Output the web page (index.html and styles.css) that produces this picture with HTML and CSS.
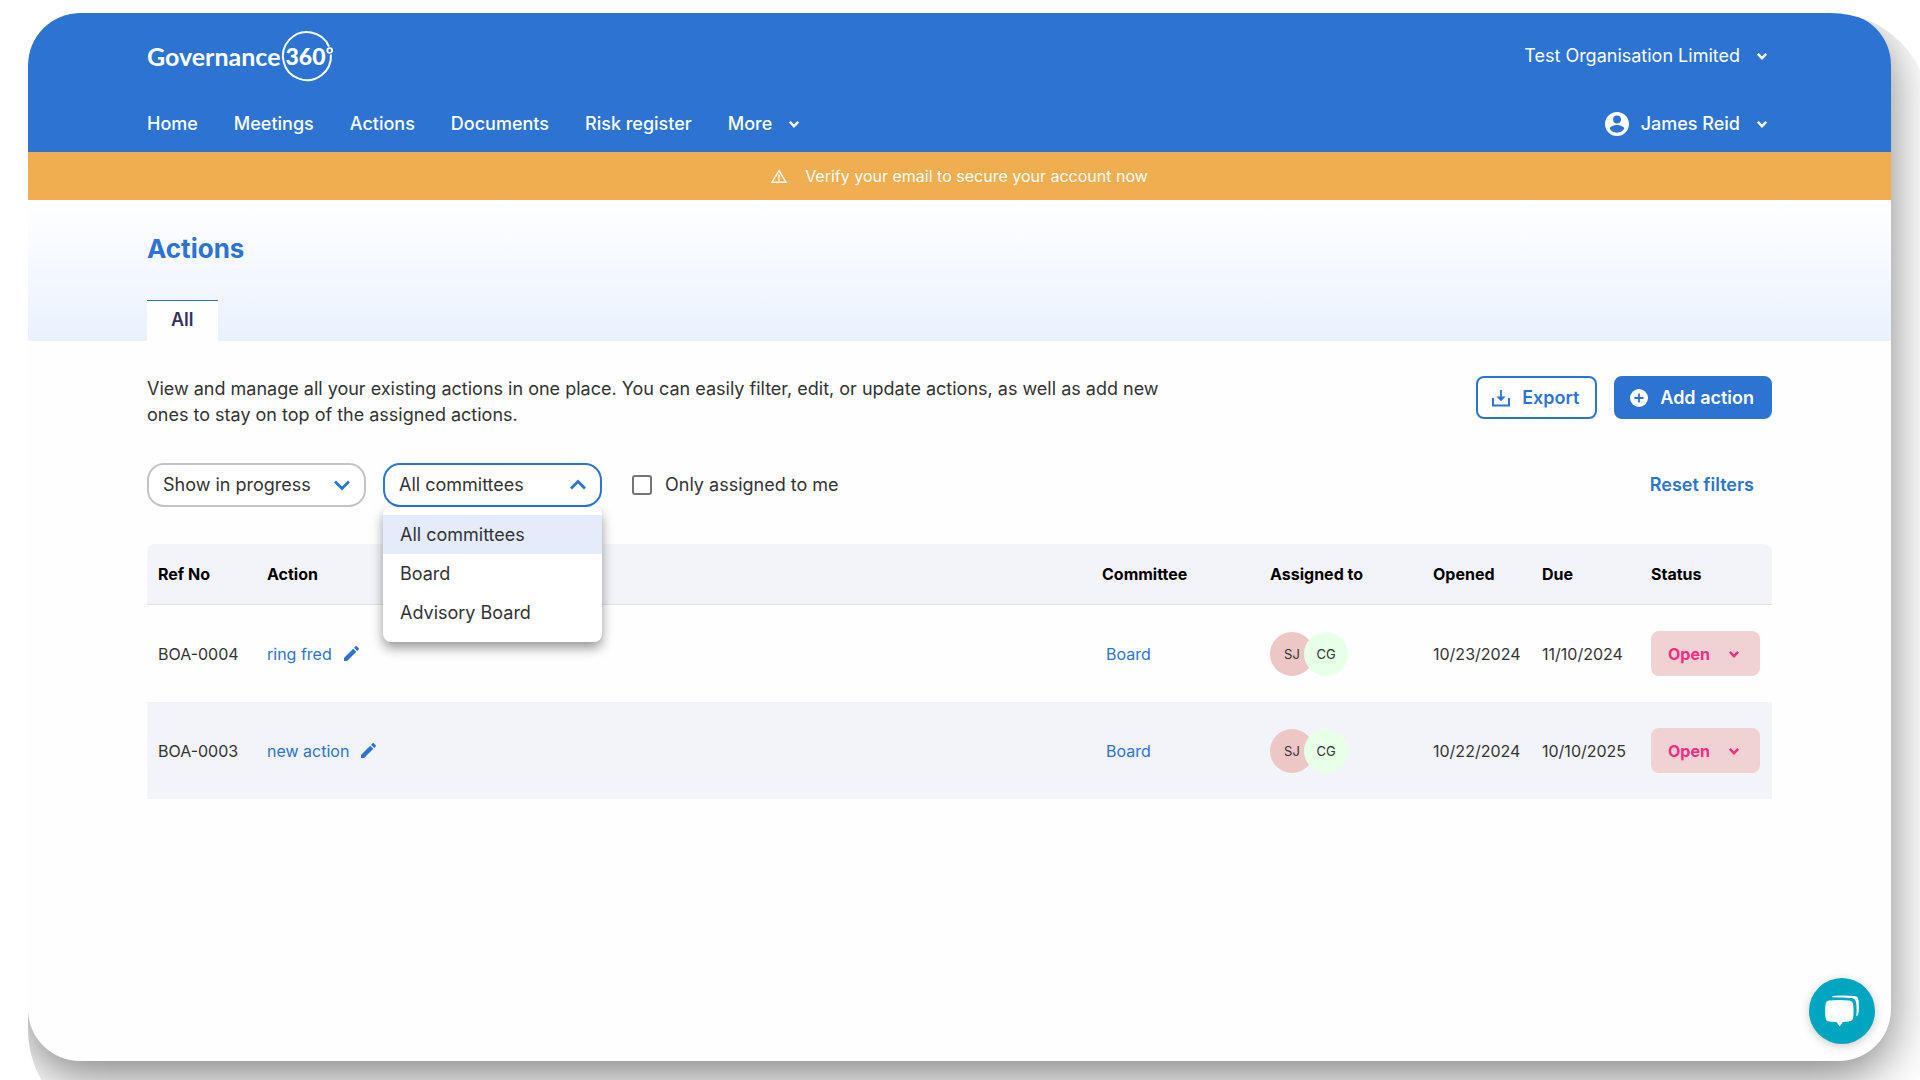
FILE: index.html
```html
<!DOCTYPE html>
<html lang="en">
<head>
<meta charset="utf-8">
<meta name="viewport" content="width=device-width, initial-scale=1">
<title>Actions – Governance 360</title>
<link rel="stylesheet" href="styles.css">
</head>
<body>
<svg class="defs" aria-hidden="true">
  <symbol id="caret" viewBox="0 0 10 10"><path d="M1.5 3.2 5 6.8 8.500 3.200" fill="none" stroke="currentColor" stroke-width="2"/></symbol>
  <symbol id="chevron" viewBox="0 0 18 12"><path d="M2 2.500 9 9.500 16 2.500" fill="none" stroke="currentColor" stroke-width="2.800"/></symbol>
  <symbol id="pencil" viewBox="3 3 18 18"><path d="M3 17.250V21h3.750L17.810 9.940l-3.750-3.750L3 17.250zM20.710 7.040a1 1 0 0 0 0-1.410l-2.340-2.340a1 1 0 0 0-1.410 0l-1.830 1.830 3.750 3.750 1.830-1.830z" fill="currentColor"/></symbol>
</svg>
<div class="stage">
  <div class="shell">
    <div class="card">
      <header class="header">
        <div class="header-row header-top">
          <a class="logo" href="#" aria-label="Governance 360">
            <span class="logo-name">Governance</span>
            <span class="logo-badge">
              <svg class="logo-ring" viewBox="0 0 52 52" aria-hidden="true">
                <path d="M48 16.600A24 24 0 1 0 49.900 24.500" fill="none" stroke="#fff" stroke-width="2"/>
                <circle cx="48.700" cy="20.500" r="2.400" fill="none" stroke="#fff" stroke-width="1.800"/>
              </svg>
              <span class="logo-num">360</span>
            </span>
          </a>
          <button class="menu-button light" type="button">Test Organisation Limited <svg class="caret"><use href="#caret"/></svg></button>
        </div>
        <div class="header-row header-nav">
          <nav class="nav">
            <a href="#">Home</a>
            <a href="#">Meetings</a>
            <a href="#">Actions</a>
            <a href="#">Documents</a>
            <a href="#">Risk register</a>
            <button class="menu-button" type="button">More <svg class="caret"><use href="#caret"/></svg></button>
          </nav>
          <button class="menu-button" type="button">
            <span class="user"><svg class="user-icon" viewBox="2 2 20 20" aria-hidden="true"><path d="M12 2a10 10 0 1 0 0 20 10 10 0 0 0 0-20zm0 3a3.200 3.200 0 1 1 0 6.600A3.200 3.200 0 0 1 12 5zm0 14.200a7.200 7.200 0 0 1-6-3.220c.03-1.990 4-3.080 6-3.080s5.970 1.090 6 3.080a7.200 7.200 0 0 1-6 3.220z" fill="currentColor"/></svg>James Reid</span>
            <svg class="caret"><use href="#caret"/></svg>
          </button>
        </div>
      </header>

      <a class="banner" href="#">
        <svg class="warn" viewBox="0 0 16 14" aria-hidden="true"><path d="M8 1.600 15 13.200H1z" fill="none" stroke="currentColor" stroke-width="1.500"/><path d="M8 5.600v3.800M8 10.300v1.500" stroke="currentColor" stroke-width="1.500"/></svg>
        <span>Verify your email to secure your account now</span>
      </a>

      <section class="hero">
        <h1>Actions</h1>
        <div class="tabs"><a class="tab" href="#">All</a></div>
      </section>

      <main class="content">
        <div class="intro">
          <p>View and manage all your existing actions in one place. You can easily filter, edit, or update actions, as well as add new ones to stay on top of the assigned actions.</p>
          <div class="buttons">
            <button class="btn btn-outline" type="button"><svg class="btn-icon" viewBox="0 0 18 18" aria-hidden="true"><path d="M1 9v7.500h16V9" fill="none" stroke="currentColor" stroke-width="2"/><path d="M9 1v9" stroke="currentColor" stroke-width="1.800"/><path d="M4.300 7.500h9.400L9 12.300z" fill="currentColor"/></svg>Export</button>
            <button class="btn btn-solid" type="button"><svg class="btn-icon" viewBox="0 0 18 18" aria-hidden="true"><circle cx="9" cy="9" r="9" fill="#fff"/><path d="M9 4.500v9M4.500 9h9" stroke="#2d73d2" stroke-width="1.800"/></svg>Add action</button>
          </div>
        </div>

        <form class="filters">
          <div class="field">
            <select class="select" aria-label="Progress"><option>Show in progress</option></select>
            <svg class="select-icon"><use href="#chevron"/></svg>
          </div>
          <div class="field open">
            <select class="select" aria-label="Committee"><option>All committees</option><option>Board</option><option>Advisory Board</option></select>
            <svg class="select-icon"><use href="#chevron"/></svg>
            <ul class="options" role="listbox" aria-label="Committee options">
              <li role="option" aria-selected="true">All committees</li>
              <li role="option" aria-selected="false">Board</li>
              <li role="option" aria-selected="false">Advisory Board</li>
            </ul>
          </div>
          <label class="check"><input type="checkbox"> Only assigned to me</label>
          <button class="reset" type="reset">Reset filters</button>
        </form>

        <table class="table">
          <colgroup><col class="c-ref"><col><col class="c-committee"><col class="c-assigned"><col class="c-date"><col class="c-date"><col class="c-status"></colgroup>
          <thead>
            <tr><th>Ref No</th><th>Action</th><th>Committee</th><th>Assigned to</th><th>Opened</th><th>Due</th><th>Status</th></tr>
          </thead>
          <tbody>
            <tr>
              <td>BOA-0004</td>
              <td><a class="action" href="#">ring fred <svg class="pencil"><use href="#pencil"/></svg></a></td>
              <td><a class="committee" href="#">Board</a></td>
              <td><span class="avatars"><span class="avatar">SJ</span><span class="avatar green">CG</span></span></td>
              <td>10/23/2024</td>
              <td>11/10/2024</td>
              <td><button class="status" type="button">Open <svg class="caret"><use href="#caret"/></svg></button></td>
            </tr>
            <tr>
              <td>BOA-0003</td>
              <td><a class="action" href="#">new action <svg class="pencil"><use href="#pencil"/></svg></a></td>
              <td><a class="committee" href="#">Board</a></td>
              <td><span class="avatars"><span class="avatar">SJ</span><span class="avatar green">CG</span></span></td>
              <td>10/22/2024</td>
              <td>10/10/2025</td>
              <td><button class="status" type="button">Open <svg class="caret"><use href="#caret"/></svg></button></td>
            </tr>
          </tbody>
        </table>
      </main>

      <button class="chat" type="button" aria-label="Open chat">
        <svg viewBox="0 0 34 32" aria-hidden="true">
          <path d="M4 5.500Q14 4.300 24 5.500 27.800 5.900 28.200 9.500 28.900 16 28.200 22.500 27.800 26.100 24 26.500L18 27 14.700 31.600 11.500 27 4 26.500Q.8 26 .5 22.500-.2 16 .5 9.500.9 5.900 4 5.500z" fill="#fff"/>
          <path d="M6.500 2.300Q7 .9 10 .7 20 0 29.500 1 33 1.400 33.500 5 34.300 12 33.500 18 33.200 21 31.300 21.500 32 13 31 7 30.500 3.500 26.500 3 17 2.300 6.500 2.300z" fill="#fff"/>
        </svg>
      </button>
    </div>
  </div>
</div>
</body>
</html>
```
FILE: styles.css
```css
* { box-sizing: border-box; }

body {
  margin: 0;
  background: #fff;
  color: #333;
  font: 400 18px/26px Inter, "Open Sans", sans-serif;
}

a { color: inherit; text-decoration: none; }
button { padding: 0; border: 0; background: none; color: inherit; font: inherit; cursor: pointer; }
.defs { position: absolute; width: 0; height: 0; }

/* The shell clips the card's drop shadow to a larger rounded shape */
.stage { min-height: 100vh; padding: 13px 0 0 28px; overflow: hidden; }
.shell { margin: 0 -10px -50px 0; padding: 0 39px 69px 0; border-radius: 100px; border-top-left-radius: 52px; overflow: hidden; }
.card {
  position: relative;
  min-height: calc(100vh - 32px);
  border-radius: 52px;
  background: #fefefe;
  box-shadow: 0 14px 50px rgba(0, 0, 0, 0.500);
}

.header {
  padding: 0 119px 4px;
  border-radius: 52px 52px 0 0;
  background: #2d73d2;
  color: #fff;
}
.header-row { display: flex; align-items: center; justify-content: space-between; }
.header-top { height: 86px; }
.header-nav { height: 49px; font-weight: 500; }
.nav { display: flex; gap: 36px; }
.menu-button { display: flex; align-items: center; gap: 16px; padding-right: 4px; }
.light { font-weight: 400; }
.caret { width: 12px; height: 12px; }
.user { display: flex; align-items: center; gap: 12px; }
.user-icon { width: 24px; height: 24px; }

.logo { display: flex; align-items: center; }
.logo-name { font: 700 25px/32px Lato, sans-serif; }
.logo-badge { display: grid; place-items: center; }
.logo-badge > * { grid-area: 1 / 1; }
.logo-ring { width: 52px; height: 52px; overflow: visible; }
.logo-num { padding-right: 2px; font: 900 23px/32px Lato, sans-serif; }

.banner {
  display: flex;
  align-items: center;
  justify-content: center;
  gap: 18px;
  height: 48px;
  background: #f0ae50;
  color: #fff;
  font-size: 16px;
}
.warn { width: 16px; height: 14px; }

.hero { padding: 33px 119px 0; background: linear-gradient(#fff, #eaf1fe); }
.hero h1 { margin: 0 0 35px; color: #2d73d2; font-size: 26px; line-height: 32px; font-weight: 700; }
.tabs { display: flex; }
.tab {
  padding: 6px 24px 8px;
  border-top: 1px solid #2d73d2;
  background: #fefefe;
  color: #32325d;
  font-weight: 600;
}

.content { padding: 35px 119px 120px; }
.intro { display: flex; align-items: flex-start; justify-content: space-between; }
.intro p { max-width: 1050px; margin: 0; }
.buttons { display: flex; gap: 17px; }
.btn {
  display: flex;
  align-items: center;
  gap: 12px;
  height: 43px;
  padding: 0 16px 0 14px;
  border: 2px solid #2d73d2;
  border-radius: 8px;
  font-weight: 600;
}
.btn-outline { background: #fff; color: #2d73d2; }
.btn-solid { background: #2d73d2; color: #fff; }
.btn-icon { width: 18px; height: 18px; }

.filters { display: flex; align-items: center; margin: 35px 0 37px; }
.field { position: relative; width: 219px; margin-right: 17px; }
.select {
  display: block;
  width: 100%;
  height: 44px;
  padding: 0 40px 0 14px;
  border: 2px solid #c4c4c4;
  border-radius: 17px;
  appearance: none;
  background: #fff;
  color: #333;
  font: inherit;
}
.select-icon { position: absolute; top: 16px; right: 15px; width: 18px; height: 12px; color: #2d73d2; pointer-events: none; }
.open .select { border-color: #2d73d2; }
.open .select-icon { transform: rotate(180deg); }
.options {
  position: absolute;
  z-index: 2;
  top: 100%;
  left: 0;
  width: 100%;
  margin: 0;
  padding: 8px 0 10px;
  border-radius: 8px;
  background: #fff;
  box-shadow: 0 6px 12px rgba(0, 0, 0, 0.400);
  list-style: none;
}
.options li { padding: 0 17px; line-height: 39px; }
.options [aria-selected="true"] { background: #e4ecfb; }
.check { display: flex; align-items: center; gap: 13px; margin-left: 13px; }
.check input { width: 20px; height: 20px; margin: 0; border: 2px solid #757575; border-radius: 3px; appearance: none; background: #fff; }
.reset { margin-left: auto; padding-right: 18px; color: #2d73d2; font-weight: 600; }

.table { width: 100%; border-collapse: separate; border-spacing: 0; table-layout: fixed; font-size: 16px; }
.c-ref, .c-date { width: 109px; }
.c-committee { width: 168px; }
.c-assigned { width: 163px; }
.c-status { width: 132px; }
.table th { height: 61px; padding: 0 0 0 11px; border-bottom: 1px solid #dfe1e6; background: #f3f4fa; color: #000; font-size: 16px; font-weight: 700; text-align: left; }
.table th:first-child { border-top-left-radius: 8px; }
.table th:last-child { border-top-right-radius: 8px; }
.table td { height: 97px; padding: 0 0 0 11px; white-space: nowrap; }
.table tbody tr:nth-child(even) { background: #f3f4fa; }
.action { display: flex; align-items: center; gap: 12px; color: #2d73d2; }
.pencil { width: 15px; height: 15px; }
.committee { padding-left: 4px; color: #2d73d2; }
.avatars { display: flex; }
.avatar { display: grid; place-items: center; width: 44px; height: 44px; border-radius: 50%; background: #edc6c6; font-size: 13px; }
.avatar + .avatar { margin-left: -10px; }
.avatar.green { background: #e8ffe8; }
.status {
  display: flex;
  align-items: center;
  justify-content: space-between;
  width: 109px;
  height: 45px;
  padding: 0 20px 0 17px;
  border-radius: 8px;
  background: #f1d2d2;
  color: #f02d87;
  font-weight: 700;
}

.chat {
  position: absolute;
  right: 16px;
  bottom: 17px;
  display: grid;
  place-items: center;
  width: 66px;
  height: 66px;
  border-radius: 50%;
  background: #00a5bf;
  box-shadow: 0 2px 10px rgba(0, 0, 0, 0.200);
}
.chat svg { width: 34px; height: 32px; }
```
